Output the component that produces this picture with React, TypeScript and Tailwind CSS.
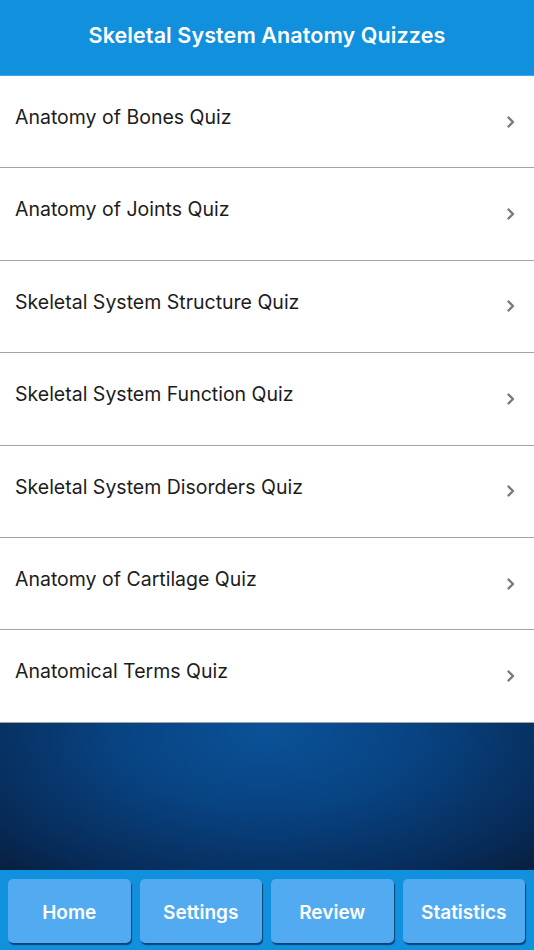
import React from 'react';

const quizzes = [
    "Anatomy of Bones Quiz",
    "Anatomy of Joints Quiz",
    "Skeletal System Structure Quiz",
    "Skeletal System Function Quiz",
    "Skeletal System Disorders Quiz",
    "Anatomy of Cartilage Quiz",
    "Anatomical Terms Quiz",
];

const tabs = ["Home", "Settings", "Review", "Statistics"];

const Chevron = () => (
    <svg width="10" height="14" viewBox="0 0 10 14" className="shrink-0">
        <path d="M2.5 2.5 L7 7 L2.5 11.5" fill="none" stroke="#7a7a7a" strokeWidth="2.4" strokeLinecap="round" strokeLinejoin="round" />
    </svg>
);

const App: React.FC = () => {
    return (
        <div className="w-[534px] h-[950px] flex flex-col overflow-hidden font-['Inter','Noto_Sans',sans-serif]">
            <header className="h-[76px] shrink-0 flex items-center justify-center bg-[#1190dd] border-b border-[#3aa6ec]">
                <h1 className="text-white text-[21.5px] font-semibold tracking-[0.1px] pb-[4px]">
                    Skeletal System Anatomy Quizzes
                </h1>
            </header>

            <ul className="bg-white shrink-0">
                {quizzes.map((q) => (
                    <li
                        key={q}
                        className="h-[92.4px] flex items-center justify-between pl-[15px] pr-[18px] border-b border-[#a3a3a3]"
                    >
                        <span className="text-[19.5px] text-[#1c1c1c] pb-[8px]">{q}</span>
                        <Chevron />
                    </li>
                ))}
            </ul>

            <div className="grow bg-[radial-gradient(ellipse_at_50%_5%,#0a5298_0%,#084382_40%,#072c5a_80%,#081f40_100%)]" />

            <nav className="h-[80px] shrink-0 bg-[#1190dd] grid grid-cols-4 gap-[9px] pl-[8px] pr-[9px] pt-[9px] pb-[7px]">
                {tabs.map((t) => (
                    <button
                        key={t}
                        className="rounded-[5px] bg-[#52abf1] shadow-[1px_2px_1px_rgba(10,40,80,0.75)] text-white text-[19px] font-semibold pt-[4px]"
                    >
                        {t}
                    </button>
                ))}
            </nav>
        </div>
    );
};

export default App;
